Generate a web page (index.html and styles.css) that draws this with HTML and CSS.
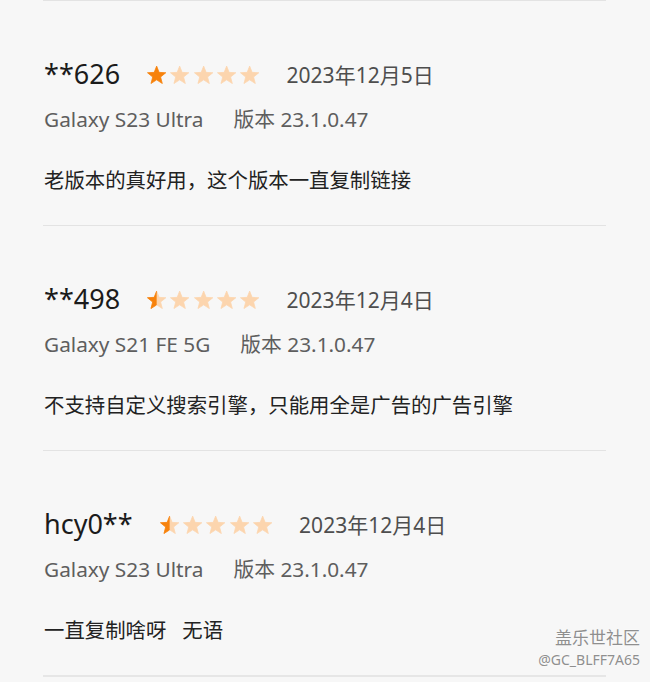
FILE: index.html
```html
<!DOCTYPE html>
<html lang="zh-CN">
<head>
<meta charset="utf-8">
<title>评论</title>
<link rel="stylesheet" href="styles.css">
</head>
<body>
<svg width="0" height="0" class="defs">
  <defs>
    <path id="star" d="M10 0 L12.53 6.52 L19.51 6.91 L14.09 11.33 L15.88 18.09 L10 14.3 L4.12 18.09 L5.91 11.33 L0.49 6.91 L7.47 6.52 Z" stroke-linejoin="round" stroke-width="0.8"/>
    <clipPath id="half"><rect x="0" y="0" width="10" height="19"/></clipPath>
  </defs>
</svg>
<main class="list">
  <section class="review">
    <div class="head">
      <span class="name">**626</span>
      <span class="stars">
        <svg class="star" viewBox="0 0 20 18.5"><use href="#star" class="on"/></svg>
        <svg class="star" viewBox="0 0 20 18.5"><use href="#star" class="off"/></svg>
        <svg class="star" viewBox="0 0 20 18.5"><use href="#star" class="off"/></svg>
        <svg class="star" viewBox="0 0 20 18.5"><use href="#star" class="off"/></svg>
        <svg class="star" viewBox="0 0 20 18.5"><use href="#star" class="off"/></svg>
      </span>
      <span class="date">2023年12月5日</span>
    </div>
    <div class="meta"><span class="device">Galaxy S23 Ultra</span><span class="ver">版本 23.1.0.47</span></div>
    <p class="text">老版本的真好用，这个版本一直复制链接</p>
  </section>
  <section class="review">
    <div class="head">
      <span class="name">**498</span>
      <span class="stars">
        <svg class="star" viewBox="0 0 20 18.5"><use href="#star" class="off"/><use href="#star" class="on" clip-path="url(#half)"/></svg>
        <svg class="star" viewBox="0 0 20 18.5"><use href="#star" class="off"/></svg>
        <svg class="star" viewBox="0 0 20 18.5"><use href="#star" class="off"/></svg>
        <svg class="star" viewBox="0 0 20 18.5"><use href="#star" class="off"/></svg>
        <svg class="star" viewBox="0 0 20 18.5"><use href="#star" class="off"/></svg>
      </span>
      <span class="date">2023年12月4日</span>
    </div>
    <div class="meta"><span class="device">Galaxy S21 FE 5G</span><span class="ver">版本 23.1.0.47</span></div>
    <p class="text">不支持自定义搜索引擎，只能用全是广告的广告引擎</p>
  </section>
  <section class="review">
    <div class="head">
      <span class="name">hcy0**</span>
      <span class="stars">
        <svg class="star" viewBox="0 0 20 18.5"><use href="#star" class="off"/><use href="#star" class="on" clip-path="url(#half)"/></svg>
        <svg class="star" viewBox="0 0 20 18.5"><use href="#star" class="off"/></svg>
        <svg class="star" viewBox="0 0 20 18.5"><use href="#star" class="off"/></svg>
        <svg class="star" viewBox="0 0 20 18.5"><use href="#star" class="off"/></svg>
        <svg class="star" viewBox="0 0 20 18.5"><use href="#star" class="off"/></svg>
      </span>
      <span class="date">2023年12月4日</span>
    </div>
    <div class="meta"><span class="device">Galaxy S23 Ultra</span><span class="ver">版本 23.1.0.47</span></div>
    <p class="text">一直复制啥呀&nbsp;&nbsp;&nbsp;无语</p>
  </section>
  <div class="end"></div>
</main>
<div class="watermark">
  <div class="wm-title">盖乐世社区</div>
  <div class="wm-user">@GC_BLFF7A65</div>
</div>
</body>
</html>
```
FILE: styles.css
```css
html, body {
  margin: 0;
  padding: 0;
  background: #f7f7f7;
  height: 682px;
  overflow: hidden;
}
body {
  font-family: "Noto Sans", "Noto Sans CJK SC", sans-serif;
  position: relative;
}
.defs {
  position: absolute;
}
.list {
  margin-left: 43px;
  width: 563px;
}
.review {
  border-top: 1px solid #e3e3e3;
  padding-top: 57px;
  height: 167px;
}
.end {
  border-top: 2px solid #e6e6e6;
}
.head {
  display: flex;
  align-items: center;
  height: 32px;
  padding-left: 1px;
}
.name {
  font-size: 27px;
  color: #1b1b1b;
  line-height: 32px;
}
.stars {
  display: flex;
  gap: 4px;
  margin-left: 27px;
  margin-top: 1px;
}
.star {
  width: 19.3px;
  height: 18px;
  display: block;
}
.on { fill: #f7820c; stroke: #f7820c; }
.off { fill: #fcd5ae; stroke: #fcd5ae; }
.date {
  margin-left: 27px;
  font-size: 21px;
  color: #4e4e4e;
}
.meta {
  margin-top: 15px;
  display: flex;
  gap: 30px;
  font-size: 20.8px;
  line-height: 28px;
  color: #5e5e5e;
  padding-left: 1px;
}
.text {
  margin: 33px 0 0;
  font-size: 20.4px;
  line-height: 28px;
  color: #222222;
  padding-left: 1px;
}
.watermark {
  position: absolute;
  right: 10px;
  top: 626px;
  text-align: right;
  color: #8f8f8f;
  text-shadow: 0 0 2px #fff;
}
.wm-title {
  font-size: 17px;
  line-height: 24px;
}
.wm-user {
  font-size: 14px;
  line-height: 20px;
}
```
